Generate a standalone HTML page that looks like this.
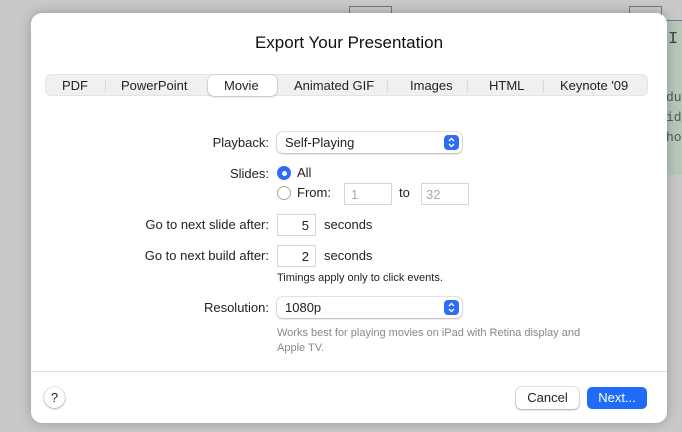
<!DOCTYPE html>
<html><head><style>
*{margin:0;padding:0;box-sizing:border-box}
body{width:682px;height:432px;background:#c9c9c9;position:relative;overflow:hidden;font-family:"Liberation Sans",sans-serif;font-size:13px;color:#222}
.a{position:absolute}
.dlg{left:31px;top:13px;width:636px;height:410px;background:#fff;border-radius:11px;box-shadow:0 0 12px rgba(0,0,0,.25)}
.lbl{position:absolute;right:398px;text-align:right;white-space:nowrap}
.pop{position:absolute;left:246px;width:185px;height:21px;border-radius:5px;background:#fff;box-shadow:0 0 0 .5px rgba(0,0,0,.2),0 1px 2px rgba(0,0,0,.2);padding:3px 0 0 8px}
.pop i{position:absolute;right:3px;top:3px;width:15px;height:15px;background:#2f6cf6;border-radius:4px}
.inp{position:absolute;height:22px;border:1px solid #d6d6d6;background:#fff;text-align:right;padding:3px 6px 0 0}
.seg{position:absolute;top:3px;font-size:13px}
.sep{position:absolute;top:6px;width:1px;height:11px;background:#d8d8d8}
</style></head><body>
<div class="a" style="left:349px;top:6px;width:43px;height:10px;border:1px solid #777;border-bottom:none"></div>
<div class="a" style="left:629px;top:6px;width:33px;height:10px;border:1px solid #777;border-bottom:none"></div>
<div class="a" style="left:660px;top:20px;width:30px;height:155px;background:#b7c8ba;border-top:1px solid #777"></div>
<div class="a" style="left:668px;top:30px;font-family:'Liberation Mono';font-size:17px;color:#444">I</div>
<div class="a" style="left:666px;top:88px;font-family:'Liberation Mono';font-size:13px;color:#555;line-height:20px">du<br>id<br>ho</div>
<div class="a dlg">
<div class="a" style="left:0;width:636px;top:20px;text-align:center;font-size:17px;color:#111">Export Your Presentation</div>
<div class="a" style="left:14px;top:61px;width:603px;height:22px;background:#f0f0f0;border-radius:6px;border:1px solid #e4e4e4">
<div class="a" style="left:162px;top:0px;width:69px;height:21px;background:#fff;border-radius:6px;box-shadow:0 0 0 .5px rgba(0,0,0,.15),0 1px 2px rgba(0,0,0,.2)"></div>
<span class="seg" style="left:16px">PDF</span>
<span class="sep" style="left:59px"></span>
<span class="seg" style="left:75px">PowerPoint</span>
<span class="seg" style="left:178px">Movie</span>
<span class="seg" style="left:248px">Animated GIF</span>
<span class="sep" style="left:341px"></span>
<span class="seg" style="left:364px">Images</span>
<span class="sep" style="left:421px"></span>
<span class="seg" style="left:443px">HTML</span>
<span class="sep" style="left:497px"></span>
<span class="seg" style="left:514px">Keynote '09</span>
</div>
<div class="lbl" style="top:122px">Playback:</div>
<div class="pop" style="top:119px">Self-Playing<i><svg width="15" height="15"><path d="M5 6l2.5-2.5L10 6M5 9l2.5 2.5L10 9" stroke="#fff" stroke-width="1.4" fill="none"/></svg></i></div>
<div class="lbl" style="top:153px">Slides:</div>
<div class="a" style="left:246px;top:153px;width:14px;height:14px;border-radius:50%;background:#2f6cf6"><div class="a" style="left:4.5px;top:4.5px;width:5px;height:5px;border-radius:50%;background:#fff"></div></div>
<div class="a" style="left:266px;top:152px">All</div>
<div class="a" style="left:246px;top:173px;width:14px;height:14px;border-radius:50%;border:1px solid #aaa;background:#fff"></div>
<div class="a" style="left:266px;top:172px">From:</div>
<div class="inp" style="left:313px;top:170px;width:48px;text-align:left;padding-left:6px;color:#aaa">1</div>
<div class="a" style="left:368px;top:172px">to</div>
<div class="inp" style="left:390px;top:170px;width:48px;text-align:left;padding-left:4px;color:#aaa">32</div>
<div class="lbl" style="top:204px">Go to next slide after:</div>
<div class="inp" style="left:246px;top:201px;width:39px">5</div>
<div class="a" style="left:293px;top:204px">seconds</div>
<div class="lbl" style="top:235px">Go to next build after:</div>
<div class="inp" style="left:246px;top:232px;width:39px">2</div>
<div class="a" style="left:293px;top:235px">seconds</div>
<div class="a" style="left:246px;top:259px;font-size:11px">Timings apply only to click events.</div>
<div class="lbl" style="top:287px">Resolution:</div>
<div class="pop" style="top:284px">1080p<i><svg width="15" height="15"><path d="M5 6l2.5-2.5L10 6M5 9l2.5 2.5L10 9" stroke="#fff" stroke-width="1.4" fill="none"/></svg></i></div>
<div class="a" style="left:246px;top:313px;font-size:11px;color:#888;line-height:15px;width:330px">Works best for playing movies on iPad with Retina display and Apple TV.</div>
<div class="a" style="left:0;top:358px;width:636px;height:1px;background:#e2e2e2"></div>
<div class="a" style="left:13px;top:374px;width:21px;height:21px;border-radius:50%;background:#fff;box-shadow:0 0 0 .5px rgba(0,0,0,.2),0 1px 2px rgba(0,0,0,.25);text-align:center;font-size:13px;line-height:21px">?</div>
<div class="a" style="left:485px;top:374px;width:63px;height:22px;border-radius:5px;background:#fff;box-shadow:0 0 0 .5px rgba(0,0,0,.2),0 1px 2px rgba(0,0,0,.25);text-align:center;line-height:22px">Cancel</div>
<div class="a" style="left:556px;top:374px;width:60px;height:22px;border-radius:5px;background:#1f6df7;color:#fff;text-align:center;line-height:22px">Next...</div>
</div>
</body></html>
